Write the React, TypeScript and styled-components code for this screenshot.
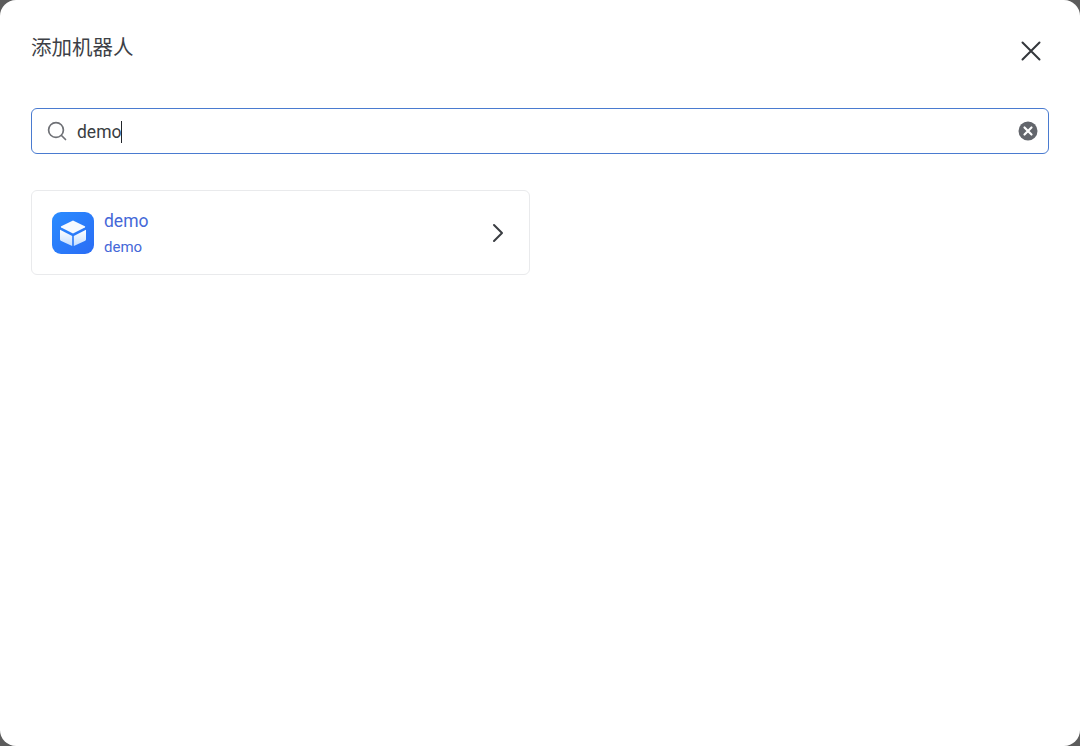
import React from 'react';
import styled, { createGlobalStyle } from 'styled-components';

const GlobalStyle = createGlobalStyle`
  html, body {
    margin: 0;
    padding: 0;
    height: 100%;
    background: #5c5c5c;
    font-family: Roboto, "Noto Sans CJK SC", sans-serif;
  }
`;

const Dialog = styled.div`
  box-sizing: border-box;
  width: 1080px;
  height: 746px;
  background: #ffffff;
  border-radius: 16px;
  padding: 29px 31px 30px;
  overflow: hidden;
`;

const Header = styled.header`
  display: flex;
  justify-content: space-between;
  align-items: flex-start;
  height: 79px;
`;

const Title = styled.h2`
  margin: 0;
  font-size: 20.5px;
  line-height: 34px;
  font-weight: 400;
  color: #3d4046;
  font-family: "Noto Sans CJK SC", sans-serif;
`;

const CloseButton = styled.button`
  display: flex;
  padding: 0;
  margin: 11px 7px 0 0;
  border: 0;
  background: none;
  color: #33363b;
`;

const SearchBox = styled.div`
  box-sizing: border-box;
  display: flex;
  align-items: center;
  height: 46px;
  padding: 0 10px 0 15px;
  border: 1px solid #4a7bd0;
  border-radius: 6px;
`;

const SearchValue = styled.div`
  flex: 1;
  display: flex;
  align-items: center;
  margin-left: 10px;
  padding-top: 1px;
  font-size: 17.5px;
  color: #3a3d42;
`;

const Caret = styled.span`
  width: 1px;
  height: 22px;
  background: #22252a;
`;

const ClearButton = styled.button`
  display: flex;
  padding: 0;
  border: 0;
  background: none;
`;

const Results = styled.div`
  display: grid;
  grid-template-columns: 499px;
  margin-top: 36px;
`;

const RobotCard = styled.div`
  box-sizing: border-box;
  display: flex;
  align-items: center;
  height: 85px;
  padding: 0 25px 0 20px;
  border: 1px solid #e9eaec;
  border-radius: 6px;
`;

const RobotInfo = styled.div`
  flex: 1;
  display: flex;
  flex-direction: column;
  margin-left: 10px;
  color: #4568d8;
`;

const RobotName = styled.span<{ $small?: boolean }>`
  font-size: ${(props) => (props.$small ? '15px' : '17.5px')};
  line-height: ${(props) => (props.$small ? '24px' : '28px')};
`;

const RobotIcon = () => (
  <svg width="42" height="42" viewBox="0 0 42 42">
    <defs>
      <linearGradient id="tile" x1="0" y1="0" x2="1" y2="1">
        <stop offset="0" stopColor="#2a8cff" />
        <stop offset="1" stopColor="#2a6cf5" />
      </linearGradient>
      <linearGradient id="side" x1="0" y1="0" x2="0" y2="1">
        <stop offset="0" stopColor="#ffffff" />
        <stop offset="1" stopColor="#c4deff" />
      </linearGradient>
    </defs>
    <rect width="42" height="42" rx="9" fill="url(#tile)" />
    <path d="M21 8.500l11.800 5.800c.5.3.5.9 0 1.200L21 21.500 9.200 15.500c-.5-.3-.5-.9 0-1.200z" fill="#f6faff" />
    <path d="M8 17.800l12.200 6.100v10.100L9.300 29c-.8-.4-1.300-1.100-1.300-2z" fill="url(#side)" />
    <path d="M34 17.800l-12.200 6.100v10.100L32.700 29c.8-.4 1.300-1.100 1.300-2z" fill="url(#side)" />
  </svg>
);

export default function App() {
  return (
    <>
      <GlobalStyle />
      <Dialog>
        <Header>
          <Title>添加机器人</Title>
          <CloseButton>
            <svg width="22" height="22" viewBox="0 0 22 22" fill="none" stroke="currentColor" strokeWidth="2" strokeLinecap="round">
              <path d="M2.500 2.500l17 17M19.500 2.500l-17 17" />
            </svg>
          </CloseButton>
        </Header>
        <SearchBox>
          <svg width="20" height="20" viewBox="0 0 20 20" fill="none" stroke="#6f7176" strokeWidth="1.7" strokeLinecap="round">
            <circle cx="9" cy="9" r="7.400" />
            <path d="M14.500 14.500L18.500 18.500" />
          </svg>
          <SearchValue>
            demo
            <Caret />
          </SearchValue>
          <ClearButton>
            <svg width="20" height="20" viewBox="0 0 20 20">
              <circle cx="10" cy="10" r="9.500" fill="#63666c" />
              <path d="M6.500 6.500l7 7M13.500 6.500l-7 7" stroke="#ffffff" strokeWidth="2.200" strokeLinecap="round" />
            </svg>
          </ClearButton>
        </SearchBox>
        <Results>
          <RobotCard>
            <RobotIcon />
            <RobotInfo>
              <RobotName>demo</RobotName>
              <RobotName $small>demo</RobotName>
            </RobotInfo>
            <svg width="12" height="20" viewBox="0 0 12 20" fill="none" stroke="#3a3d42" strokeWidth="2" strokeLinecap="round" strokeLinejoin="round">
              <path d="M2 2l8 8-8 8" />
            </svg>
          </RobotCard>
        </Results>
      </Dialog>
    </>
  );
}
